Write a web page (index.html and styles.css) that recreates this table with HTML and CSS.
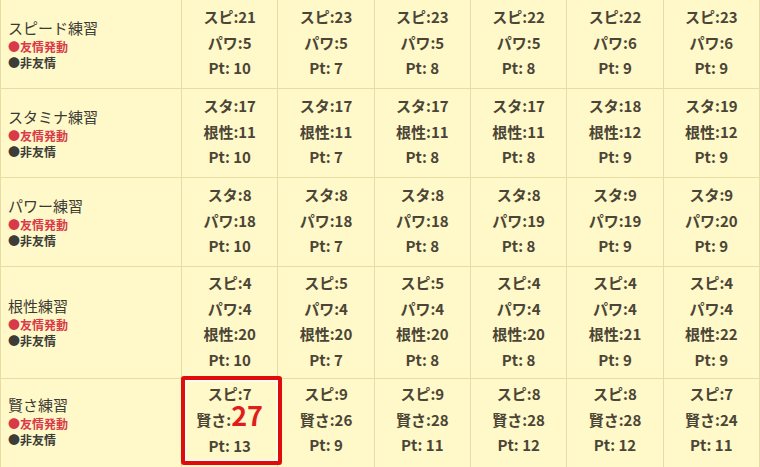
FILE: index.html
```html
<!DOCTYPE html>
<html lang="ja">
<head>
<meta charset="utf-8">
<link rel="stylesheet" href="styles.css">
</head>
<body>
<table class="grid">
  <tr class="r3">
    <th><div class="ttl">スピード練習</div><div class="yu">●友情発動</div><div class="hi">●非友情</div></th>
    <td>スピ:21<br>パワ:5<br>Pt: 10</td>
    <td>スピ:23<br>パワ:5<br>Pt: 7</td>
    <td>スピ:23<br>パワ:5<br>Pt: 8</td>
    <td>スピ:22<br>パワ:5<br>Pt: 8</td>
    <td>スピ:22<br>パワ:6<br>Pt: 9</td>
    <td>スピ:23<br>パワ:6<br>Pt: 9</td>
  </tr>
  <tr class="r3">
    <th><div class="ttl">スタミナ練習</div><div class="yu">●友情発動</div><div class="hi">●非友情</div></th>
    <td>スタ:17<br>根性:11<br>Pt: 10</td>
    <td>スタ:17<br>根性:11<br>Pt: 7</td>
    <td>スタ:17<br>根性:11<br>Pt: 8</td>
    <td>スタ:17<br>根性:11<br>Pt: 8</td>
    <td>スタ:18<br>根性:12<br>Pt: 9</td>
    <td>スタ:19<br>根性:12<br>Pt: 9</td>
  </tr>
  <tr class="r3">
    <th><div class="ttl">パワー練習</div><div class="yu">●友情発動</div><div class="hi">●非友情</div></th>
    <td>スタ:8<br>パワ:18<br>Pt: 10</td>
    <td>スタ:8<br>パワ:18<br>Pt: 7</td>
    <td>スタ:8<br>パワ:18<br>Pt: 8</td>
    <td>スタ:8<br>パワ:19<br>Pt: 8</td>
    <td>スタ:9<br>パワ:19<br>Pt: 9</td>
    <td>スタ:9<br>パワ:20<br>Pt: 9</td>
  </tr>
  <tr class="r4">
    <th><div class="ttl">根性練習</div><div class="yu">●友情発動</div><div class="hi">●非友情</div></th>
    <td>スピ:4<br>パワ:4<br>根性:20<br>Pt: 10</td>
    <td>スピ:5<br>パワ:4<br>根性:20<br>Pt: 7</td>
    <td>スピ:5<br>パワ:4<br>根性:20<br>Pt: 8</td>
    <td>スピ:4<br>パワ:4<br>根性:20<br>Pt: 8</td>
    <td>スピ:4<br>パワ:4<br>根性:21<br>Pt: 9</td>
    <td>スピ:4<br>パワ:4<br>根性:22<br>Pt: 9</td>
  </tr>
  <tr class="r5">
    <th><div class="ttl">賢さ練習</div><div class="yu">●友情発動</div><div class="hi">●非友情</div></th>
    <td class="red best"><span class="mark"></span>スピ:7<br>賢さ:<span class="big">27</span><br>Pt: 13</td>
    <td class="red">スピ:9<br>賢さ:26<br>Pt: 9</td>
    <td class="red">スピ:9<br>賢さ:28<br>Pt: 11</td>
    <td class="red">スピ:8<br>賢さ:28<br>Pt: 12</td>
    <td class="red">スピ:8<br>賢さ:28<br>Pt: 12</td>
    <td class="red">スピ:7<br>賢さ:24<br>Pt: 11</td>
  </tr>
</table>
</body>
</html>
```

FILE: styles.css
```css
html, body {
  margin: 0;
  padding: 0;
  background: #fff8c8;
  overflow: hidden;
}
.grid {
  border-collapse: collapse;
  width: 760px;
  table-layout: fixed;
  font-family: "Noto Sans CJK JP", "Noto Sans", sans-serif;
  background: #fff8c8;
  margin-top: -1px;
}
.grid th, .grid td {
  border: 1px solid #e8dca4;
  padding: 0;
}
.grid th {
  width: 181px;
  text-align: left;
  padding-left: 7px;
  font-weight: normal;
  vertical-align: middle;
  box-sizing: border-box;
}
.grid td {
  text-align: center;
  vertical-align: middle;
  font-size: 15px;
  font-weight: bold;
  line-height: 25.5px;
  color: #4a4536;
  padding-bottom: 3px;
}
.r3 { height: 89px; }
.r4 { height: 112px; }
.r5 { height: 92px; }
.r5 td { padding-bottom: 10px; }
.r5 th { padding-bottom: 6px; }
.ttl {
  font-size: 15px;
  color: #3a3a34;
  line-height: 19px;
  margin-bottom: 2px;
}
.yu, .hi {
  font-size: 12px;
  font-weight: bold;
  line-height: 16px;
}
.yu { color: #d83a4a; }
.hi { color: #3c3c38; }
.red { color: #c23a3e; }
.big {
  font-size: 27px;
  color: #e01d1d;
  line-height: 18px;
}
.best { position: relative; }
.mark {
  position: absolute;
  left: -1px;
  top: -3px;
  width: 101px;
  height: 89px;
  box-sizing: border-box;
  border: 4px solid #e00b0b;
  border-radius: 3px;
  box-shadow: inset 0 0 0 1.5px #ffffff;
}
```
